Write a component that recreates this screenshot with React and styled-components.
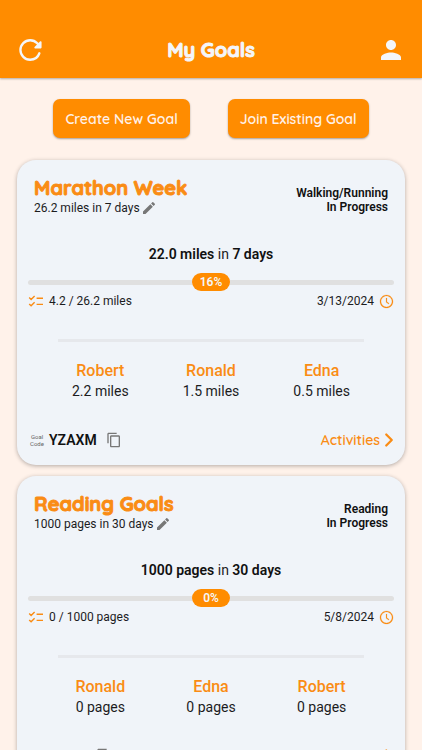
import React, { useState } from 'react';
import styled, { createGlobalStyle } from 'styled-components';
import { IoReload } from 'react-icons/io5';
import { MdPerson, MdEdit, MdContentCopy } from 'react-icons/md';
import { AiOutlineClockCircle } from 'react-icons/ai';
import { FiChevronRight } from 'react-icons/fi';

const orange = '#ff8c00';
const titleFont = 'Quicksand, Lato, "Open Sans", sans-serif';

const GlobalStyle = createGlobalStyle`
  * {
    box-sizing: border-box;
  }
  body {
    margin: 0;
    background-color: #fff2ea;
    color: #1c1c1e;
    font-family: Roboto, sans-serif;
  }
  h1, h2, p {
    margin: 0;
  }
  button {
    border: none;
    padding: 0;
    background: none;
    font: inherit;
    cursor: pointer;
  }
`;

const Header = styled.header`
  display: flex;
  justify-content: space-between;
  align-items: center;
  padding: 34px 16px 12px;
  background-color: ${orange};
  box-shadow: 0 1px 2px rgba(0, 0, 0, 0.3);
`;

const HeaderTitle = styled.h1`
  color: #f4f6fa;
  font-family: ${titleFont};
  font-size: 20px;
  line-height: 32px;
  font-weight: 700;
  -webkit-text-stroke: 1px currentColor;
`;

const HeaderButton = styled.button`
  display: flex;
  justify-content: center;
  align-items: center;
  width: 30px;
  height: 32px;
  color: #f4f6fa;
`;

const RefreshIcon = styled(IoReload)`
  path:first-of-type {
    stroke-width: 46px;
  }
`;

const Actions = styled.div`
  display: flex;
  justify-content: center;
  gap: 38px;
  padding: 21px 16px 22px;
`;

const ActionButton = styled.button`
  height: 39px;
  padding: 0 12px;
  border-radius: 7px;
  background-color: ${orange};
  color: #fff1e9;
  font-family: ${titleFont};
  font-size: 14px;
  font-weight: 600;
  box-shadow: 0 1px 2px rgba(0, 0, 0, 0.35);
`;

const GoalList = styled.main`
  display: flex;
  flex-direction: column;
  gap: 11px;
  padding: 0 17px 16px;
`;

const Card = styled.article`
  padding: 16px 11px 14px;
  border-radius: 19px;
  background-color: #f0f4f9;
  box-shadow: 0 1px 4px rgba(0, 0, 0, 0.3);
`;

const CardTop = styled.div`
  display: flex;
  justify-content: space-between;
  padding: 0 6px;
`;

const GoalTitle = styled.h2`
  color: #fa8c14;
  font-family: ${titleFont};
  font-size: 20px;
  line-height: 24px;
  font-weight: 700;
  -webkit-text-stroke: 1px currentColor;
`;

const GoalTarget = styled.p`
  display: flex;
  align-items: center;
  gap: 1px;
  font-size: 12px;
  line-height: 16px;
`;

const EditButton = styled.button`
  display: flex;
  color: #777;
`;

const GoalStatus = styled.p`
  padding-top: 10px;
  text-align: right;
  font-size: 12px;
  line-height: 14px;
  font-weight: 600;
  color: #111;
`;

const Remaining = styled.p`
  margin-top: 28px;
  text-align: center;
  font-size: 14px;
  line-height: 20px;

  strong {
    font-weight: 600;
    color: #111;
  }
`;

const Progress = styled.div`
  display: flex;
  align-items: center;
  margin-top: 9px;
`;

const Track = styled.div`
  flex: 1;
  height: 5px;
  background-color: #e0e0e0;
  border-radius: ${(props) => (props.$end ? '0 3px 3px 0' : '3px 0 0 3px')};
`;

const Percent = styled.span`
  width: 38px;
  border-radius: 9px;
  background-color: ${orange};
  color: #f4f6fa;
  text-align: center;
  font-size: 12px;
  line-height: 18px;
  font-weight: 600;
`;

const Details = styled.div`
  display: flex;
  justify-content: space-between;
  margin-top: 2px;
  font-size: 12px;
  line-height: 16px;
`;

const Detail = styled.span`
  display: flex;
  align-items: center;
  gap: 5px;

  svg {
    color: #fa8c14;
  }
`;

const Divider = styled.hr`
  height: 3px;
  margin: 30px 30px 19px;
  border: none;
  background-color: #e6e8ec;
`;

const Members = styled.div`
  display: grid;
  grid-template-columns: repeat(3, 1fr);
  padding: 0 17px;
`;

const Member = styled.div`
  text-align: center;
  font-size: 14px;
  line-height: 20px;
`;

const MemberName = styled.p`
  color: #fa8c14;
  font-size: 16px;
  font-weight: 500;
`;

const CardBottom = styled.div`
  display: flex;
  justify-content: space-between;
  align-items: center;
  margin-top: 28px;
`;

const CodeRow = styled.div`
  display: flex;
  align-items: center;
`;

const CodeLabel = styled.span`
  width: 18px;
  text-align: center;
  color: #666;
  font-size: 6px;
  line-height: 7px;
`;

const Code = styled.span`
  margin: 0 9px 0 3px;
  color: #111;
  font-size: 14px;
  line-height: 18px;
  font-weight: 600;
`;

const CopyButton = styled.button`
  display: flex;
  color: #777;
`;

const ActivitiesLink = styled.a`
  display: flex;
  align-items: center;
  color: #fa8c14;
  font-family: ${titleFont};
  font-size: 14px;
  line-height: 22px;
  font-weight: 600;
  text-decoration: none;

  svg {
    margin: 0 -6px 0 -2px;
  }
`;

const goals = [
  {
    title: 'Marathon Week',
    type: 'Walking/Running',
    target: '26.2 miles',
    time: '7 days',
    left: '22.0 miles',
    percent: 16,
    done: '4.2 / 26.2 miles',
    date: '3/13/2024',
    code: 'YZAXM',
    members: [
      { name: 'Robert', amount: '2.2 miles' },
      { name: 'Ronald', amount: '1.5 miles' },
      { name: 'Edna', amount: '0.5 miles' },
    ],
  },
  {
    title: 'Reading Goals',
    type: 'Reading',
    target: '1000 pages',
    time: '30 days',
    left: '1000 pages',
    percent: 0,
    done: '0 / 1000 pages',
    date: '5/8/2024',
    code: 'TJELF',
    members: [
      { name: 'Ronald', amount: '0 pages' },
      { name: 'Edna', amount: '0 pages' },
      { name: 'Robert', amount: '0 pages' },
    ],
  },
];

const ChecklistIcon = () => (
  <svg width="16" height="16" viewBox="0 0 16 16" fill="none" stroke="currentColor" strokeWidth="1.4" aria-hidden="true">
    <path d="M1.2 4.6 3.1 6.4 6.6 2.9M1.2 10.9 3.1 12.7 6.6 9.2M8.6 5.2H15M8.6 11.4H15" />
  </svg>
);

const GoalCard = ({ goal }) => (
  <Card>
    <CardTop>
      <div>
        <GoalTitle>{goal.title}</GoalTitle>
        <GoalTarget>
          {`${goal.target} in ${goal.time}`}
          <EditButton type="button" aria-label="Edit goal"><MdEdit size={16} /></EditButton>
        </GoalTarget>
      </div>
      <GoalStatus>
        {goal.type}
        <br />
        In Progress
      </GoalStatus>
    </CardTop>
    <Remaining>
      <strong>{goal.left}</strong>
      {' in '}
      <strong>{goal.time}</strong>
    </Remaining>
    <Progress>
      <Track />
      <Percent>{`${goal.percent}%`}</Percent>
      <Track $end />
    </Progress>
    <Details>
      <Detail>
        <ChecklistIcon />
        {goal.done}
      </Detail>
      <Detail>
        {goal.date}
        <AiOutlineClockCircle size={15} strokeWidth={12} />
      </Detail>
    </Details>
    <Divider />
    <Members>
      {goal.members.map((member) => (
        <Member key={member.name}>
          <MemberName>{member.name}</MemberName>
          <p>{member.amount}</p>
        </Member>
      ))}
    </Members>
    <CardBottom>
      <CodeRow>
        <CodeLabel>Goal Code</CodeLabel>
        <Code>{goal.code}</Code>
        <CopyButton type="button" aria-label="Copy code"><MdContentCopy size={16} /></CopyButton>
      </CodeRow>
      <ActivitiesLink href="#activities">
        Activities
        <FiChevronRight size={22} strokeWidth={2.5} />
      </ActivitiesLink>
    </CardBottom>
  </Card>
);

const App = () => {
  const [goalList] = useState(goals);

  return (
    <>
      <GlobalStyle />
      <Header>
        <HeaderButton type="button" aria-label="Refresh"><RefreshIcon size={26} /></HeaderButton>
        <HeaderTitle>My Goals</HeaderTitle>
        <HeaderButton type="button" aria-label="Profile"><MdPerson size={32} /></HeaderButton>
      </Header>
      <Actions>
        <ActionButton type="button">Create New Goal</ActionButton>
        <ActionButton type="button">Join Existing Goal</ActionButton>
      </Actions>
      <GoalList>
        {goalList.map((goal) => <GoalCard key={goal.title} goal={goal} />)}
      </GoalList>
    </>
  );
};

export default App;
